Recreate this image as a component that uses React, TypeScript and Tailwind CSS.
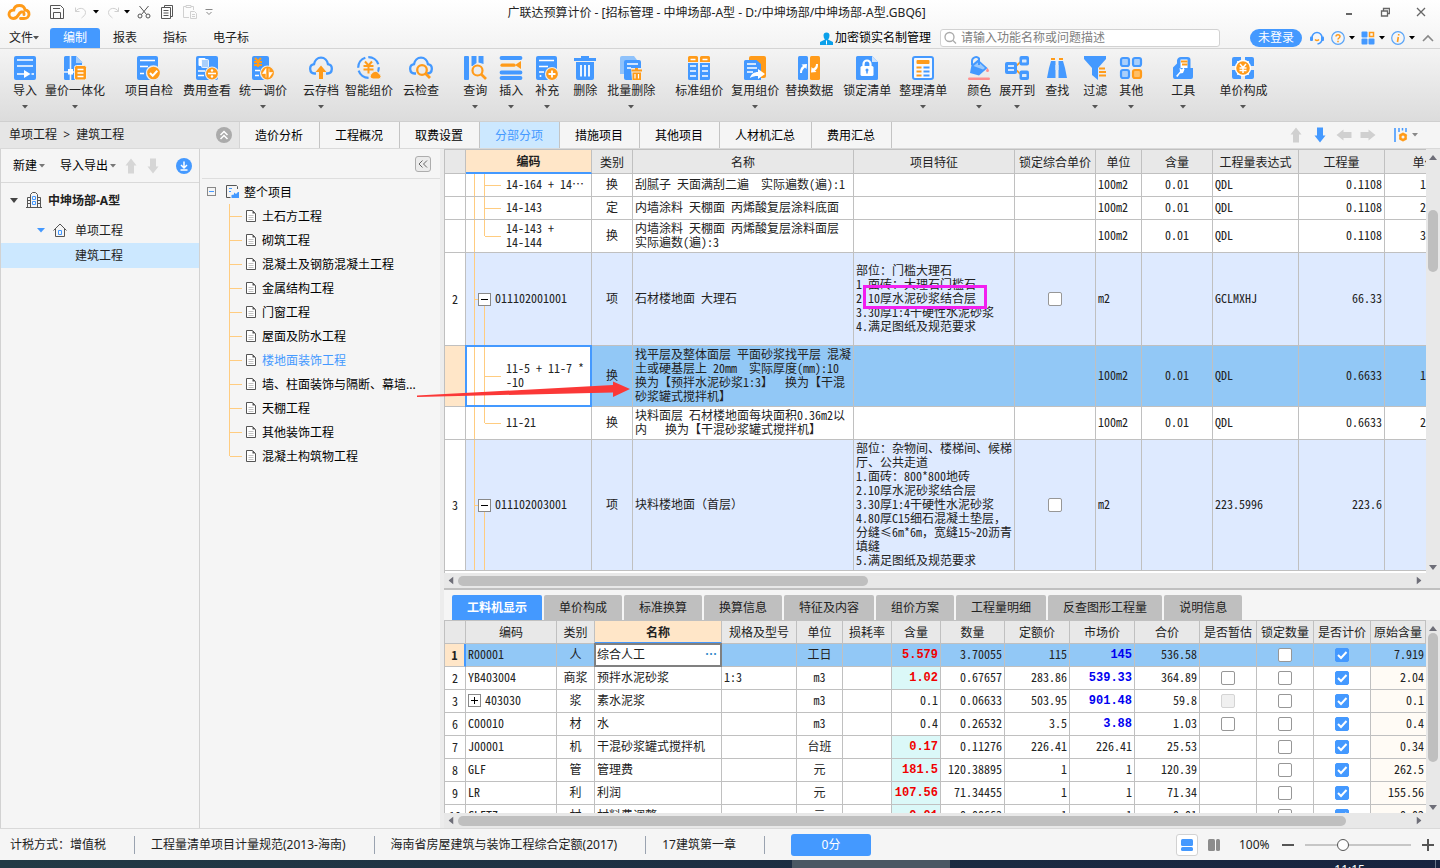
import React, { type ReactNode } from "react";

const B = "#4499ff";
const O = "#ff9b1a";
const L = "#a9cffb";

function Icon({ children, className = "size-6" }: { children: ReactNode; className?: string }) {
  return (
    <svg viewBox="0 0 24 24" className={className} fill="none" aria-hidden="true">
      {children}
    </svg>
  );
}

function Caret({ className = "text-[#555]" }: { className?: string }) {
  return (
    <svg viewBox="0 0 6 4" className={`h-1 w-1.5 shrink-0 ${className}`} aria-hidden="true">
      <path d="M0 0h6L3 3.5z" fill="currentColor" />
    </svg>
  );
}

const cloud = "M7 17.5H5.5A4.7 4.7 0 0 1 5 8.2C5.6 4.4 8.5 1.6 12 1.6s6.4 2.8 7 6.6a4.7 4.7 0 0 1-.5 9.3H17";

const icons: Record<string, ReactNode> = {
  import: (
    <Icon>
      <rect x="1" width="22" height="24" rx="2" fill={B} />
      <path d="M4 4h16M4 10h16M4 18h9M18.500 18H21" stroke="#fff" strokeWidth="1.6" />
      <path d="M11 14l6.500 4-6.500 4z" fill="#fff" />
    </Icon>
  ),
  combine: (
    <Icon>
      <path d="M1 1.500A1.500 1.500 0 0 1 2.500 0H13l6 6v18H2.500A1.500 1.500 0 0 1 1 22.500z" fill={B} />
      <path d="M13 0l7 7h-7z" fill={L} />
      <path d="M7.500 0v24M1 16h12" stroke="#eef4fb" strokeWidth="1.600" />
      <rect x="5" y="13" width="5" height="5.500" fill="#fff" />
      <rect x="11.500" y="9.500" width="12" height="14.500" rx="2" fill={O} stroke="#f0f0f0" />
      <path d="M14.500 13.500h6M14.500 17h6M14.500 20.500h6" stroke="#fff" strokeWidth="1.400" />
    </Icon>
  ),
  check: (
    <Icon>
      <rect x="0" width="21" height="24" rx="2" fill={B} />
      <path d="M3 4.500h15M3 10.500h8M3 17.500h4" stroke="#fff" strokeWidth="1.700" />
      <circle cx="16.500" cy="17" r="7" fill={O} stroke="#ececec" strokeWidth="1.300" />
      <path d="M13 17l2.700 2.800 4.600-5" stroke="#fff" strokeWidth="2" />
    </Icon>
  ),
  fee: (
    <Icon>
      <rect x="1" width="22" height="24" rx="2" fill={B} />
      <rect x="3.500" y="2" width="7" height="8" rx="1" fill="#fff" />
      <rect x="6.500" y="3.500" width="7" height="8" rx="1" fill={L} stroke="#fff" strokeWidth=".8" />
      <path d="M3 15h7M3 19.500h6" stroke="#fff" strokeWidth="1.600" />
      <circle cx="17" cy="17.500" r="6.500" fill={O} stroke="#ececec" strokeWidth="1.200" />
      <path d="M13 17.500h8" stroke="#fff" strokeWidth="1.600" />
      <circle cx="17" cy="14.500" r="1.200" fill="#fff" />
      <circle cx="17" cy="20.500" r="1.200" fill="#fff" />
    </Icon>
  ),
  adjust: (
    <Icon>
      <rect x="1" width="17" height="24" rx="2" fill={B} />
      <path d="M4 2l3 3.500L10 2M3 6h8M3 9h8M7 5.500V11" stroke={O} strokeWidth="2" />
      <path d="M4 14.500h5M4 19.500h4" stroke="#fff" strokeWidth="1.600" />
      <circle cx="16.500" cy="17" r="7" fill={O} stroke="#ececec" strokeWidth="1.200" />
      <path d="M15 21.500v-9l-3.500 5H15M18 12.500v9l3.500-5H18" fill="#fff" stroke="#fff" strokeWidth=".6" />
    </Icon>
  ),
  cloudSave: (
    <Icon>
      <path d={cloud} stroke={B} strokeWidth="2.300" />
      <path d="M12 9.500l5.500 6.500H14v7h-4v-7H6.500z" fill={O} />
    </Icon>
  ),
  smart: (
    <Icon>
      <circle cx="11.500" cy="11.500" r="10.300" stroke={B} strokeWidth="2.200" strokeDasharray="13 3" />
      <path d="M8 5.500l3.500 4L15 5.500M6.500 10h10M6.500 13.500h10M11.500 9.500v8" stroke={O} strokeWidth="2" />
      <path d="M16 23h6a2.600 2.600 0 0 0 .3-5 4 4 0 0 0-7.300-.6A2.900 2.900 0 0 0 16 23z" fill={O} stroke="#ececec" />
    </Icon>
  ),
  cloudCheck: (
    <Icon>
      <path d={cloud} stroke={B} strokeWidth="2.300" />
      <circle cx="13" cy="14" r="4.800" stroke={O} strokeWidth="2.300" fill="#ececec" />
      <path d="M16.500 17.500l4.500 4.500" stroke={O} strokeWidth="2.800" />
    </Icon>
  ),
  query: (
    <Icon>
      <rect x="1" width="5" height="24" rx="1" fill={B} />
      <path d="M8.500 0h5v7l-4 3h-1zM15.500 0h5v8l-5-1.500z" fill={B} />
      <circle cx="14.500" cy="14.500" r="5" stroke={O} strokeWidth="2.200" />
      <path d="M18 18l5 5" stroke={O} strokeWidth="2.600" />
    </Icon>
  ),
  insert: (
    <Icon>
      <path d="M2.500 2h19M2.500 16.500h19M2.500 22h19" stroke={B} strokeWidth="3.800" strokeLinecap="round" />
      <path d="M3 9.200h12" stroke={O} strokeWidth="3.200" strokeLinecap="round" />
      <path d="M22 5v8l-6-4z" fill={O} />
    </Icon>
  ),
  supplement: (
    <Icon>
      <rect x="1" width="21" height="24" rx="2" fill={B} />
      <path d="M4 4.500h15M4 10.500h9M4 16h5" stroke="#fff" strokeWidth="1.600" />
      <circle cx="5.500" cy="20" r="1" fill="#fff" />
      <circle cx="17" cy="18" r="6.500" fill={O} stroke="#ececec" strokeWidth="1.200" />
      <path d="M13.500 18h7M17 14.500v7" stroke="#fff" strokeWidth="1.800" />
    </Icon>
  ),
  remove: (
    <Icon>
      <path d="M8 0h8v2h7v3H1V2h7zM3 6h18v16a2 2 0 0 1-2 2H5a2 2 0 0 1-2-2z" fill={B} />
      <path d="M8 9v11.500M12 9v11.500M16 9v11.500" stroke="#fff" strokeWidth="1.800" />
    </Icon>
  ),
  batchRemove: (
    <Icon>
      <path d="M1 2a2 2 0 0 1 2-2h12l3 4H7v14H1z" fill="#8fc2fb" />
      <rect x="5" y="4" width="17" height="20" rx="2" fill={B} />
      <path d="M8 8h11M8 12h4" stroke="#fff" strokeWidth="1.300" />
      <path d="M12 12h11v12H13z" fill="#ececec" />
      <path d="M16 12h3v1.500h4v2H12.500v-2H16zM13.500 16.500h8.500V24h-8.500z" fill={O} />
      <path d="M16 18v4.500M19.500 18v4.500" stroke="#fff" strokeWidth="1.200" />
    </Icon>
  ),
  standard: (
    <Icon>
      <path d="M1 6V1.500Q1 0 2.500 0h7Q11 0 11 1.500V6zM13 6V1.500Q13 0 14.500 0h7Q23 0 23 1.500V6z" fill={O} />
      <path d="M1 7h10v17H2.500Q1 24 1 22.500zM13 7h10v15.500q0 1.500-1.500 1.500H13z" fill={B} />
      <path d="M3.500 3.500h5M15.500 3.500h5M3 10h6M15 10h6M3 15h6M15 15h6M3 20h6M15 20h6" stroke="#fff" strokeWidth="1.600" />
    </Icon>
  ),
  reuse: (
    <Icon>
      <rect x="6" width="17" height="22" rx="2" fill={O} />
      <path d="M1 5.500A1.500 1.500 0 0 1 2.500 4h11l4.500 4v16H2.500A1.500 1.500 0 0 1 1 22.500z" fill={B} />
      <path d="M4 8h9M4 12h10M4 16h6" stroke="#fff" strokeWidth="1.500" />
      <path d="M7 22c1-4 4-6 8-6v-3l7 5-7 5v-3c-3 0-5.500.500-8 2z" fill="#fff" />
    </Icon>
  ),
  replace: (
    <Icon>
      <rect x="1" width="10" height="24" rx="1.500" fill={B} />
      <rect x="13" width="10" height="24" rx="1.500" fill={O} />
      <path d="M3 17c0-4 1-6 3-7L4.500 8.500 10 8l-.5 5L8 11.500c-2 1.500-3 3-3 5.500zM21 8c0 4-1 5-3 6.500l1.500 1.500-5.500.5.500-5.500 1.500 1.500c2-1 3-2.500 3-4.500z" fill="#fff" />
    </Icon>
  ),
  lock: (
    <Icon>
      <path d="M1 1.500A1.500 1.500 0 0 1 2.500 0H17l6 6v16.500a1.500 1.500 0 0 1-1.500 1.500h-19A1.500 1.500 0 0 1 1 22.500z" fill={B} />
      <path d="M17 0l6 6h-6z" fill="#cfe3fb" />
      <rect x="5.500" y="10" width="13" height="10" rx="1.500" fill="#fff" />
      <path d="M8.500 11V8a3.500 3.500 0 0 1 7 0v3" stroke="#fff" strokeWidth="2.200" />
      <circle cx="12" cy="14" r="1.500" fill={B} />
      <path d="M12 14v3.500" stroke={B} strokeWidth="1.500" />
    </Icon>
  ),
  arrange: (
    <Icon>
      <rect x="2" y="1" width="20" height="22" rx="2" fill="#f6f9fd" stroke={B} strokeWidth="2" />
      <rect x="5.500" y="4" width="13" height="4" rx="1" fill={O} />
      <path d="M5.500 11.500h5M5.500 15.500h5M5.500 19.500h5" stroke={O} strokeWidth="1.800" />
      <path d="M12.500 11.500h6M12.500 15.500h6M12.500 19.500h6" stroke={B} strokeWidth="1.800" />
    </Icon>
  ),
  color: (
    <Icon>
      <path d="M11 3.500L20.500 12 12 19.500 3 17l1.500-8z" fill={B} />
      <path d="M6.500 10l5-4 6.500 6-2 1.500z" fill="#9cc9fb" />
      <path d="M5 9V5a4 4 0 0 1 7-2.500V9" stroke={B} strokeWidth="2" />
      <path d="M20.500 12.500q2 3 0 3.500-2-.5 0-3.500z" fill="#ff8f8f" stroke="#ff8f8f" />
      <rect x="1" y="21.500" width="22" height="2.500" rx="1.200" fill="#ff8f8f" />
    </Icon>
  ),
  expand: (
    <Icon>
      <path d="M17 4.500L9 12l8 7.500" stroke={O} strokeWidth="1.800" />
      <rect x="0" y="6" width="12" height="12" rx="2" fill={B} />
      <path d="M3 10h6M3 14h6" stroke="#fff" strokeWidth="1.500" />
      <rect x="14.500" y="0" width="9.500" height="9.500" rx="2" fill={B} />
      <rect x="14.500" y="14.500" width="9.500" height="9.500" rx="2" fill={B} />
      <rect x="17" y="3.500" width="4.500" height="3" rx=".5" fill="#d9e9fb" />
      <rect x="17" y="18" width="4.500" height="3" rx=".5" fill="#d9e9fb" />
    </Icon>
  ),
  find: (
    <Icon>
      <path d="M6 3h4M14 3h4" stroke={O} strokeWidth="2.200" />
      <path d="M6 5h4.500v17H2L4 12zM18 5h-4.500v17H22l-2-10z" fill={B} />
      <path d="M10.500 9h3v5h-3z" fill="#d9e9fb" />
    </Icon>
  ),
  filter: (
    <Icon>
      <path d="M1 0h22v3l-8 9v12l-6-5v-7L1 3z" fill={B} />
      <path d="M16 12.500h6M16 16h7M16 19.500h7" stroke={O} strokeWidth="2" />
    </Icon>
  ),
  other: (
    <Icon>
      <rect x="2" y="2" width="8" height="8" rx="2" fill={L} stroke={B} strokeWidth="2.200" />
      <rect x="14" y="2" width="8" height="8" rx="2" fill={L} stroke={B} strokeWidth="2.200" />
      <rect x="2" y="14" width="8" height="8" rx="2" fill={L} stroke={B} strokeWidth="2.200" />
      <rect x="14" y="14" width="8" height="8" rx="2" fill="#ffbf66" stroke={O} strokeWidth="2.200" />
    </Icon>
  ),
  tools: (
    <Icon>
      <path d="M2 11.500l4-4V4.500Q6.500 1 10 1h6.500Q19.500 1 19.500 4v8H22v9q0 2-2 2H4q-2 0-2-2z" fill={B} />
      <path d="M9.500 12V3.500h7V12z" fill="#fff" />
      <path d="M10 5.500h6.500M11 8.500h5.500" stroke={O} strokeWidth="1.800" />
      <path d="M5 20l4-4.500-.5-3.500 2.500 1.500 1.500-2 1 2-1.500 3.500-3 .5-2.500 3.500z" fill="#fff" />
    </Icon>
  ),
  price: (
    <Icon>
      <path d="M3 1h7v4H6v5H1V3q0-2 2-2zM21 1h-7v4h4v5h5V3q0-2-2-2zM3 23h7v-4H6v-5H1v7q0 2 2 2zM21 23h-7v-4h4v-5h5v7q0 2-2 2z" fill={B} />
      <circle cx="12" cy="12" r="7.500" fill={O} stroke="#fff" strokeWidth="1.400" />
      <path d="M9 8l3 3.500L15 8M8.500 12h7M8.500 14.500h7M12 11.500V17" stroke="#fff" strokeWidth="1.500" />
    </Icon>
  ),
};

const ribbon: { label: string; icon: string; gap: string; menu?: boolean }[] = [
  { label: "导入", icon: "import", gap: "ml-0", menu: true },
  { label: "量价一体化", icon: "combine", gap: "ml-2", menu: true },
  { label: "项目自检", icon: "check", gap: "ml-5" },
  { label: "费用查看", icon: "fee", gap: "ml-2.5" },
  { label: "统一调价", icon: "adjust", gap: "ml-2", menu: true },
  { label: "云存档", icon: "cloudSave", gap: "ml-4", menu: true },
  { label: "智能组价", icon: "smart", gap: "ml-1.5" },
  { label: "云检查", icon: "cloudCheck", gap: "ml-2.5" },
  { label: "查询", icon: "query", gap: "ml-6", menu: true },
  { label: "插入", icon: "insert", gap: "ml-3", menu: true },
  { label: "补充", icon: "supplement", gap: "ml-3", menu: true },
  { label: "删除", icon: "remove", gap: "ml-3.5" },
  { label: "批量删除", icon: "batchRemove", gap: "ml-2.5", menu: true },
  { label: "标准组价", icon: "standard", gap: "ml-5" },
  { label: "复用组价", icon: "reuse", gap: "ml-2", menu: true },
  { label: "替换数据", icon: "replace", gap: "ml-1.5" },
  { label: "锁定清单", icon: "lock", gap: "ml-2.5" },
  { label: "整理清单", icon: "arrange", gap: "ml-2", menu: true },
  { label: "颜色", icon: "color", gap: "ml-5", menu: true },
  { label: "展开到", icon: "expand", gap: "ml-2", menu: true },
  { label: "查找", icon: "find", gap: "ml-2.5" },
  { label: "过滤", icon: "filter", gap: "ml-3.5", menu: true },
  { label: "其他", icon: "other", gap: "ml-3", menu: true },
  { label: "工具", icon: "tools", gap: "ml-7", menu: true },
  { label: "单价构成", icon: "price", gap: "ml-6", menu: true },
];

function Checkbox({ checked, disabled, label }: { checked?: boolean; disabled?: boolean; label: string }) {
  return (
    <span className="inline-grid size-3.5 align-middle">
      <input
        type="checkbox"
        aria-label={label}
        defaultChecked={checked}
        disabled={disabled}
        className="peer col-start-1 row-start-1 size-3.5 appearance-none rounded-[2px] border border-[#979797] bg-white checked:border-[#4499ff] checked:bg-[#4499ff] disabled:border-[#d4d4d4] disabled:bg-[#f0f0f0]"
      />
      <svg viewBox="0 0 14 14" className="pointer-events-none col-start-1 row-start-1 size-3.5 opacity-0 peer-checked:opacity-100" fill="none" aria-hidden="true">
        <path d="M3 7l3 3 5.500-6" stroke="#fff" strokeWidth="2" />
      </svg>
    </span>
  );
}

function TitleBar() {
  return (
    <div className="flex h-7 items-center pb-1">
      <div className="flex flex-1 items-center pl-[7px] text-[#555]">
        <svg viewBox="0 0 24 18" className="h-[18px] w-6" fill="none" aria-hidden="true">
          <path
            d="M13.500 15.500H17c3 0 5-2 5-4.300 0-2.400-1.700-4-4-4.200C17.500 4 15.300 2.500 12.500 2.500c-3 0-5.300 1.800-5.700 4.500-2.600 0-4.800 1.700-4.800 4.300 0 2.400 1.800 4.200 4.300 4.200 5.700 0 4.200-5.500 8-6.500 2-.4 3 .8 2.700 2.500"
            stroke={O}
            strokeWidth="2.900"
            strokeLinecap="round"
          />
        </svg>
        <button aria-label="保存" className="ml-[19px]">
          <svg viewBox="0 0 14 14" className="size-3.5" fill="none" stroke="currentColor" aria-hidden="true">
            <path d="M.500.500h10l3 3v10H.500zM3.500 13.500v-6h7v6M3 3.500h7" />
          </svg>
        </button>
        <button aria-label="撤销" className="ml-2.5 text-[#d0d0d0]">
          <svg viewBox="0 0 13 13" className="size-[13px]" fill="none" stroke="currentColor" aria-hidden="true">
            <path d="M1.500 1.500v4h4M1.500 5.500c3-5 10-3.500 10 1 0 3-2.500 4-4 5.500" />
          </svg>
        </button>
        <Caret className="ml-1.5 text-black" />
        <button aria-label="恢复" className="ml-2 text-[#d0d0d0]">
          <svg viewBox="0 0 13 13" className="size-[13px]" fill="none" stroke="currentColor" aria-hidden="true">
            <path d="M11.500 1.500v4h-4M11.500 5.500c-3-5-10-3.500-10 1 0 3 2.500 4 4 5.500" />
          </svg>
        </button>
        <Caret className="ml-1 text-black" />
        <button aria-label="剪切" className="ml-[7px]">
          <svg viewBox="0 0 14 14" className="size-3.5" fill="none" stroke="currentColor" aria-hidden="true">
            <path d="M2.500 1l7 8.500M11.500 1l-7 8.500" />
            <circle cx="3" cy="11" r="2" />
            <circle cx="11" cy="11" r="2" />
          </svg>
        </button>
        <button aria-label="复制" className="ml-2.5">
          <svg viewBox="0 0 12 14" className="h-3.5 w-3" fill="none" stroke="currentColor" aria-hidden="true">
            <path d="M3.500 2V.500h8v11H10M.500 2.500h9v11h-9zM2.500 5.500h5M2.500 8h5M2.500 10.500h5" />
          </svg>
        </button>
        <button aria-label="粘贴" className="ml-2.5 text-[#d0d0d0]">
          <svg viewBox="0 0 14 14" className="size-3.5" fill="none" stroke="currentColor" aria-hidden="true">
            <path d="M6 12.500H.500v-11H3m5 0h2.500V5M3 .500h5v2H3zM7.500 6.500h4l2 2v5h-6zM9 9.500h3M9 11.500h3" />
          </svg>
        </button>
        <svg viewBox="0 0 8 7" className="ml-2 h-[7px] w-2" fill="none" stroke="#888" aria-hidden="true">
          <path d="M.500.500h7M1.500 3L4 5.500 6.500 3" />
        </svg>
      </div>
      <h1 className="pt-0.5 whitespace-nowrap text-[#222]">广联达预算计价 - [招标管理 - 中坤场部-A型 - D:/中坤场部/中坤场部-A型.GBQ6]</h1>
      <div className="flex flex-1 items-center justify-end gap-[26px] pr-3.5 text-[#666]">
        <button aria-label="最小化">
          <svg viewBox="0 0 10 10" className="size-2.5" stroke="currentColor" strokeWidth="2" aria-hidden="true"><path d="M2 7h6" /></svg>
        </button>
        <button aria-label="还原">
          <svg viewBox="0 0 10 10" className="size-2.5" fill="none" stroke="currentColor" aria-hidden="true"><path d="M3.500 3.500v-2h6v5h-2M1.500 4h6v5h-6z" strokeWidth="1.300" /></svg>
        </button>
        <button aria-label="关闭">
          <svg viewBox="0 0 10 10" className="size-2.5" stroke="currentColor" strokeWidth="1.300" aria-hidden="true"><path d="M1 1l8 8M9 1L1 9" /></svg>
        </button>
      </div>
    </div>
  );
}

function MenuBar() {
  return (
    <div className="flex h-5 items-center">
      <nav className="flex h-full items-center">
        <button className="flex items-center pl-[9px]">文件<Caret className="text-[#555]" /></button>
        <button className="ml-[11px] h-full w-[50px] rounded-t-[3px] bg-[#4499ff] text-white">编制</button>
        <button className="w-[50px]">报表</button>
        <button className="w-[50px]">指标</button>
        <button className="w-[62px]">电子标</button>
      </nav>
      <div className="ml-auto flex items-center">
        <button className="flex items-center gap-0.5 text-black">
          <svg viewBox="0 0 13 13" className="size-[13px]" fill="#0ba0ea" aria-hidden="true">
            <path d="M3.500 3.500a3 3 0 0 1 6 0q0 2.500-1.500 4l5 2.500v3H0v-3l5-2.500q-1.500-1.500-1.500-4z" />
            <path d="M6.500 8.500v4" stroke="#fff" />
          </svg>
          加密锁实名制管理
        </button>
        <label className="ml-[9px] flex h-[18px] w-[280px] items-center rounded-[3px] border border-[#d2d2d2] bg-white pl-0.5">
          <svg viewBox="0 0 14 14" className="size-3.5" fill="none" stroke="#aaa" strokeWidth="1.300" aria-hidden="true">
            <circle cx="6.500" cy="6" r="4.500" /><path d="M10 9.500l3 3" />
          </svg>
          <input aria-label="搜索" placeholder="请输入功能名称或问题描述" className="ml-1 min-w-0 flex-1 bg-transparent outline-none placeholder:text-[#808080]" />
        </label>
        <button className="ml-[30px] h-[18px] w-[52px] rounded-full bg-[#4499ff] text-white">未登录</button>
        <button aria-label="客服" className="ml-2">
          <svg viewBox="0 0 14 14" className="size-3.5" fill="none" aria-hidden="true">
            <path d="M2 8V6.500a5 5 0 0 1 10 0V8q0 4-4.500 5" stroke={B} strokeWidth="1.500" />
            <rect y="5.500" width="3" height="4.500" rx="1" fill={B} /><rect x="11" y="5.500" width="3" height="4.500" rx="1" fill={B} />
            <path d="M5 8.500q2 2 4 0" stroke={O} strokeWidth="1.500" />
          </svg>
        </button>
        <button aria-label="帮助" className="ml-[7px] flex items-center gap-1">
          <svg viewBox="0 0 14 14" className="size-3.5" fill="none" aria-hidden="true">
            <circle cx="7" cy="7" r="6.300" stroke="#5aa5f8" strokeWidth="1.200" />
            <path d="M5 5.500c0-2.500 4-2.500 4 0C9 7 7 7 7 8.500M7 9.800v1.400" stroke={O} strokeWidth="1.500" />
          </svg>
          <Caret className="text-black" />
        </button>
        <button aria-label="应用" className="ml-1.5 flex items-center gap-1">
          <svg viewBox="0 0 14 14" className="size-3.5" aria-hidden="true">
            <rect x=".5" y=".5" width="6" height="6" rx="1" fill={B} /><rect x=".5" y="7.500" width="6" height="6" rx="1" fill={B} />
            <rect x="7.500" y="7.500" width="6" height="6" rx="1" fill={B} /><rect x="8.500" y="1.500" width="4" height="4" fill="none" stroke={O} strokeWidth="1.500" />
          </svg>
          <Caret className="text-black" />
        </button>
        <button aria-label="信息" className="ml-1.5 flex items-center gap-1">
          <svg viewBox="0 0 14 14" className="size-3.5" fill="none" aria-hidden="true">
            <circle cx="7" cy="7" r="6.300" stroke="#5aa5f8" strokeWidth="1.200" />
            <path d="M7.700 3v1.500M7.300 6l-.8 5" stroke={O} strokeWidth="1.600" />
          </svg>
          <Caret className="text-black" />
        </button>
        <button aria-label="收起" className="mr-1.5 ml-[7px]">
          <svg viewBox="0 0 12 8" className="h-2 w-3" fill="none" stroke="#888" strokeWidth="1.600" aria-hidden="true"><path d="M1 7l5-5 5 5" /></svg>
        </button>
      </div>
    </div>
  );
}

function Ribbon() {
  return (
    <div className="flex h-[72px] shrink-0 items-start overflow-hidden bg-linear-to-b from-[#f4f4f4] to-[#dcdcdc] pt-[7px] pl-[13px]">
      {ribbon.map((r) => (
        <button key={r.label} className={`flex shrink-0 flex-col items-center ${r.gap}`}>
          {icons[r.icon]}
          <span className="mt-[3px] h-4 leading-4">{r.label}</span>
          {r.menu && <Caret className="mt-1.5 text-[#555]" />}
        </button>
      ))}
    </div>
  );
}

const pageTabs = ["造价分析", "工程概况", "取费设置", "分部分项", "措施项目", "其他项目", "人材机汇总", "费用汇总"];

function Arrow({ turn = "", className = "text-[#d0d0d0]" }: { turn?: string; className?: string }) {
  return (
    <svg viewBox="0 0 16 16" className={`size-4 ${turn} ${className}`} aria-hidden="true">
      <path d="M8 .5l5.500 7H11v8H5v-8H2.500z" fill="currentColor" />
    </svg>
  );
}

function PageTabs() {
  return (
    <div className="flex h-7 shrink-0 border-y border-t-[#cfcfcf] border-b-[#d9d9d9] bg-[#f5f5f5]">
      <div className="flex w-60 items-center justify-between border-r border-[#d5d5d5] bg-[#e6e6e6] pr-[7px] pl-[9px] text-[#222]">
        <span>单项工程 &nbsp;&gt; &nbsp;建筑工程</span>
        <button aria-label="收起导航">
          <svg viewBox="0 0 16 16" className="size-4" fill="none" aria-hidden="true">
            <circle cx="8" cy="8" r="8" fill="#ababab" />
            <path d="M4.500 8L8 4.500 11.500 8M4.500 12L8 8.500l3.500 3.500" stroke="#fff" strokeWidth="1.500" />
          </svg>
        </button>
      </div>
      {pageTabs.map((t) => (
        <button key={t} className={`border-r border-[#c4c4c4] pt-0.5 pr-4 pl-[15px] ${t === "分部分项" ? "bg-[#cce8ff] text-[#4499ff]" : "text-black"}`}>
          {t}
        </button>
      ))}
      <div className="ml-auto flex items-center gap-2 pr-[22px]">
        <Arrow />
        <Arrow turn="rotate-180" className="text-[#4499ff]" />
        <Arrow turn="-rotate-90" />
        <Arrow turn="rotate-90" />
        <button aria-label="列设置" className="ml-2.5 flex items-center gap-1">
          <svg viewBox="0 0 14 14" className="size-3.5" fill="none" aria-hidden="true">
            <path d="M1 0v14" stroke={B} strokeWidth="1.600" />
            <path d="M5 0v4M8.500 0v2.500M12 0v4" stroke={B} strokeWidth="1.500" />
            <circle cx="9" cy="9" r="2.700" stroke={O} strokeWidth="2.400" />
            <path d="M9 4.500v9M5 6.800l8 4.500M13 6.800l-8 4.500" stroke={O} strokeWidth="1.200" strokeDasharray="2 5" />
          </svg>
          <Caret className="text-[#888]" />
        </button>
      </div>
    </div>
  );
}

function ProjectPanel() {
  return (
    <aside className="flex w-[200px] shrink-0 flex-col border-x border-[#d2d2d2] bg-[#f5f5f5]">
      <div className="flex h-[34px] items-center border-b border-[#d9d9d9] pl-3 text-black">
        <button className="flex items-center">新建<Caret className="ml-0.5 text-[#777]" /></button>
        <button className="ml-[15px] flex items-center">导入导出<Caret className="ml-0.5 text-[#777]" /></button>
        <Arrow className="ml-[7px] text-[#d6d6d6]" />
        <Arrow turn="rotate-180" className="ml-1.5 text-[#d6d6d6]" />
        <button aria-label="下载" className="mr-[7px] ml-auto">
          <svg viewBox="0 0 16 16" className="size-4" fill="none" aria-hidden="true">
            <circle cx="8" cy="8" r="8" fill={B} />
            <path d="M8 3.500v6M5 7l3 3 3-3M4.500 12h7" stroke="#fff" strokeWidth="1.500" />
          </svg>
        </button>
      </div>
      <ul>
        <li className="flex h-[34px] items-center pl-[9px] font-bold text-[#222]">
          <svg viewBox="0 0 8 5" className="h-[5px] w-2" aria-hidden="true"><path d="M0 0h8L4 5z" fill="#444" /></svg>
          <svg viewBox="0 0 16 16" className="ml-2 size-4" fill="none" aria-hidden="true">
            <path d="M0 15.500h16M4.500 15V2.500l2-2h3l2 2V15M4.500 5.500h-3V15M11.500 5.500h3V15M1.500 8.500h3M1.500 11.500h3M11.500 8.500h3M11.500 11.500h3" stroke="#555" />
            <path d="M6.500 4.500h3v3h-3zM6.500 9.500h3v3h-3z" stroke={B} />
          </svg>
          <span className="ml-1.5 pt-0.5">中坤场部-A型</span>
        </li>
        <li className="flex h-[26px] items-center pl-9 text-[#222]">
          <svg viewBox="0 0 8 5" className="h-[5px] w-2" aria-hidden="true"><path d="M0 0h8L4 4.500z" fill={B} /></svg>
          <svg viewBox="0 0 14 14" className="ml-2 size-3.5" fill="none" aria-hidden="true">
            <path d="M.5 7.500L7 1l6.500 6.500M2.500 6v7.500h9V6" stroke="#555" />
            <path d="M5.500 7.500h3v4h-3z" stroke={B} />
          </svg>
          <span className="ml-2 pt-0.5">单项工程</span>
        </li>
        <li className="flex h-[25px] items-center bg-[#cce8ff] pl-[74px] text-[#222]">建筑工程</li>
      </ul>
    </aside>
  );
}

const sections = ["土石方工程", "砌筑工程", "混凝土及钢筋混凝土工程", "金属结构工程", "门窗工程", "屋面及防水工程", "楼地面装饰工程", "墙、柱面装饰与隔断、幕墙...", "天棚工程", "其他装饰工程", "混凝土构筑物工程"];

function SectionPanel() {
  return (
    <aside className="flex w-60 shrink-0 flex-col bg-[#f5f5f5]">
      <div className="ml-0.5 flex h-[30px] items-center justify-end border-b border-[#dedede] pr-[9px]">
        <button aria-label="折叠" className="grid size-4 place-items-center rounded-[3px] border border-[#adadad] bg-[#ebebeb]">
          <svg viewBox="0 0 10 8" className="h-2 w-2.5" fill="none" stroke="#666" aria-hidden="true"><path d="M4.500.5L1 4l3.500 3.500M9 .5L5.500 4 9 7.500" /></svg>
        </button>
      </div>
      <div className="flex h-[25px] items-center pl-[7px] text-black">
        <span className="grid size-[9px] place-items-center border border-[#888]"><span className="h-px w-[5px] bg-[#4499ff]" /></span>
        <svg viewBox="0 0 13 13" className="ml-2.5 size-[13px]" fill="none" aria-hidden="true">
          <path d="M11.500 4V1.500L10.500.5h-10v12h4" stroke="#555" />
          <path d="M3 3.500h3M3 6.500h2" stroke={B} />
          <path d="M5.500 13v-3l2.500-.5V7.500l2 1.500 2-2h1v6z" fill={B} />
        </svg>
        <span className="ml-[5px] pt-0.5">整个项目</span>
      </div>
      <ul className="text-black">
        {sections.map((s, i) => (
          <li key={s} className="flex h-6 items-center pl-[29px]">
            <span className={`w-px self-start bg-[#ffcc80] ${i === sections.length - 1 ? "h-3" : "h-6"}`} />
            <span className="h-px w-3 bg-[#ffcc80]" />
            <svg viewBox="0 0 10 12" className="ml-1 h-3 w-2.5" fill="none" aria-hidden="true">
              <path d="M.5.5h6l3 3v8h-9z" fill="#fff" stroke="#555" />
              <path d="M6.500.5v3h3z" fill="#555" />
              <path d="M2.500 5.500h5M2.500 7.500h5M2.500 9.500h5" stroke="#aaa" strokeWidth=".7" />
            </svg>
            <span className={`ml-1.5 pt-0.5 ${s === "楼地面装饰工程" ? "text-[#4499ff]" : ""}`}>{s}</span>
          </li>
        ))}
      </ul>
    </aside>
  );
}

function Triangle({ turn = "" }: { turn?: string }) {
  return (
    <svg viewBox="0 0 8 5" className={`h-[5px] w-2 shrink-0 ${turn}`} aria-hidden="true">
      <path d="M0 5h8L4 0z" fill="#6e6e78" />
    </svg>
  );
}

function VScroll({ lead, thumb }: { lead: string; thumb: string }) {
  return (
    <div className="flex w-3.5 shrink-0 flex-col items-center bg-[#e8e8e8] pt-1.5 pb-[18px]">
      <Triangle />
      <span className={`w-2.5 rounded-full bg-[#bfbfbf] ${lead} ${thumb}`} />
      <span className="mt-auto"><Triangle turn="rotate-180" /></span>
    </div>
  );
}

function HScroll({ thumb }: { thumb: string }) {
  return (
    <div className="flex h-[15px] shrink-0 items-center bg-[#e8e8e8] px-[3px]">
      <Triangle turn="-rotate-90" />
      <span className={`ml-[3px] h-2.5 rounded-full bg-[#bfbfbf] ${thumb}`} />
      <span className="ml-auto flex"><Triangle turn="rotate-90" /></span>
    </div>
  );
}

const frame = "border-r border-b border-[#c0c0c0] p-0";
const cell = `${frame} pb-0.5`;
const head = `${frame} bg-[#e8e8e8] font-normal`;
const activeHead = "border-r border-b-2 border-r-[#c0c0c0] border-b-[#4499ff] bg-[#ffe6c8] p-0 font-bold";

type Bill = {
  no?: string;
  code: string;
  kind: string;
  name: string;
  feature?: string;
  unit: string;
  qty?: string;
  expr: string;
  amount: string;
  price?: string;
  height: string;
  tree: "item" | "child" | "last";
  selected?: boolean;
  marked?: boolean;
};

const bills: Bill[] = [
  { code: "14-164 + 14…", kind: "换", name: "刮腻子 天面满刮二遍  实际遍数(遍):1", unit: "100m2", qty: "0.01", expr: "QDL", amount: "0.1108", price: "1", height: "h-[22px]", tree: "child" },
  { code: "14-143", kind: "定", name: "内墙涂料 天棚面 丙烯酸复层涂料底面", unit: "100m2", qty: "0.01", expr: "QDL", amount: "0.1108", price: "2", height: "h-[22px]", tree: "child" },
  { code: "14-143 +\n14-144", kind: "换", name: "内墙涂料 天棚面 丙烯酸复层涂料面层\n实际遍数(遍):3", unit: "100m2", qty: "0.01", expr: "QDL", amount: "0.1108", price: "3", height: "h-8", tree: "last" },
  { no: "2", code: "011102001001", kind: "项", name: "石材楼地面 大理石", feature: "部位：门槛大理石\n1.面砖：大理石门槛石\n2.10厚水泥砂浆结合层\n3.30厚1:4干硬性水泥砂浆\n4.满足图纸及规范要求", unit: "m2", expr: "GCLMXHJ", amount: "66.33", height: "h-[92px]", tree: "item", marked: true },
  { code: "11-5 + 11-7 *\n-10", kind: "换", name: "找平层及整体面层 平面砂浆找平层 混凝\n土或硬基层上 20mm  实际厚度(mm):10\n换为【预拌水泥砂浆1:3】  换为【干混\n砂浆罐式搅拌机】", unit: "100m2", qty: "0.01", expr: "QDL", amount: "0.6633", price: "1", height: "h-[60px]", tree: "child", selected: true },
  { code: "11-21", kind: "换", name: "块料面层 石材楼地面每块面积0.36m2以\n内   换为【干混砂浆罐式搅拌机】", unit: "100m2", qty: "0.01", expr: "QDL", amount: "0.6633", price: "2", height: "h-8", tree: "last" },
  { no: "3", code: "011102003001", kind: "项", name: "块料楼地面（首层）", feature: "部位：杂物间、楼梯间、候梯\n厅、公共走道\n1.面砖：800*800地砖\n2.10厚水泥砂浆结合层\n3.30厚1:4干硬性水泥砂浆\n4.80厚C15细石混凝土垫层，\n分缝≤6m*6m，宽缝15~20沥青\n填缝\n5.满足图纸及规范要求", unit: "m2", expr: "223.5996", amount: "223.6", height: "h-[130px]", tree: "item" },
];

function CodeCell({ b }: { b: Bill }) {
  return (
    <div className={`flex ${b.height} ${b.selected ? "relative z-10 bg-white outline-2 -outline-offset-1 outline-[#4499ff]" : ""}`}>
      <span className="w-[9px] shrink-0 border-r border-[#ffcc80]" />
      {b.tree === "item" ? (
        <>
          <span className="h-px w-[3px] shrink-0 self-center bg-[#ffcc80]" />
          <span className="flex shrink-0 flex-col items-center">
            <span className="flex-1" />
            <button aria-label="折叠" className="grid size-[13px] place-items-center border border-[#888] bg-white"><span className="h-px w-[7px] bg-black" /></button>
            <span className="w-px flex-1 bg-[#ffcc80]" />
          </span>
          <span className="ml-1 self-center pb-0.5">{b.code}</span>
        </>
      ) : (
        <>
          <span className={`w-2.5 shrink-0 border-r border-[#ffcc80] ${b.tree === "last" ? "h-1/2" : "h-full"}`} />
          <span className="h-px w-4 shrink-0 self-center bg-[#ffcc80]" />
          <span className="ml-[5px] self-center pb-0.5">{b.code}</span>
        </>
      )}
    </div>
  );
}

function BillGrid() {
  return (
    <div className="flex min-h-0 flex-1">
      <div className="flex min-w-0 flex-1 flex-col">
        <div className="min-h-0 flex-1 overflow-hidden border-t border-l border-[#c0c0c0] bg-white">
          <table className="w-[1020px] table-fixed border-separate border-spacing-0 whitespace-pre text-[#222]">
            <colgroup>
              <col className="w-[21px]" /><col className="w-[126px]" /><col className="w-[41px]" /><col className="w-[221px]" />
              <col className="w-[161px]" /><col className="w-[81px]" /><col className="w-[46px]" /><col className="w-[71px]" />
              <col className="w-[86px]" /><col className="w-[86px]" /><col />
            </colgroup>
            <thead>
              <tr className="h-6">
                <th className={head} />
                <th className={activeHead}>编码</th>
                {["类别", "名称", "项目特征", "锁定综合单价", "单位", "含量", "工程量表达式", "工程量", "单价"].map((h) => (
                  <th key={h} className={head}>{h}</th>
                ))}
              </tr>
            </thead>
            <tbody>
              {bills.map((b, i) => {
                const tone = b.selected ? "bg-[#92c8f6]" : b.tree === "item" ? "bg-[#deeaff]" : "bg-white";
                return (
                  <tr key={i}>
                    <td className={`${frame} text-center ${b.selected ? "bg-[#ffe6c8]" : "bg-white"}`}>{b.no}</td>
                    <td className={`${frame} ${tone}`}><CodeCell b={b} /></td>
                    <td className={`${cell} ${tone} text-center`}>{b.kind}</td>
                    <td className={`${cell} ${tone} pl-0.5`}>{b.name}</td>
                    <td className={`${cell} ${tone} pl-0.5`}>
                      <div className="relative">
                        {b.feature}
                        {b.marked && <span className="absolute top-[22px] left-[7px] h-6 w-[124px] border-3 border-[#f21ff0]" />}
                      </div>
                    </td>
                    <td className={`${cell} ${tone} text-center`}>{b.tree === "item" && <Checkbox label="锁定综合单价" />}</td>
                    <td className={`${cell} ${tone} pl-0.5`}>{b.unit}</td>
                    <td className={`${cell} ${tone} text-center`}>{b.qty}</td>
                    <td className={`${cell} ${tone} pl-0.5`}>{b.expr}</td>
                    <td className={`${cell} ${tone} pr-0.5 text-right`}>{b.amount}</td>
                    <td className={`${cell} ${tone} pl-[35px]`}>{b.price}</td>
                  </tr>
                );
              })}
            </tbody>
          </table>
        </div>
        <HScroll thumb="w-[42%]" />
      </div>
      <VScroll lead="mt-[50px]" thumb="h-[62px]" />
    </div>
  );
}

const detailTabs = ["工料机显示", "单价构成", "标准换算", "换算信息", "特征及内容", "组价方案", "工程量明细", "反查图形工程量", "说明信息"];

type Res = {
  no: string; code: string; kind: string; name: string; spec?: string; unit: string;
  qty: string; changed?: boolean; count: string; base: string; market: string; edited?: boolean;
  total: string; estimate?: "on" | "off"; origin: string; plus?: boolean;
};

const resources: Res[] = [
  { no: "1", code: "R00001", kind: "人", name: "综合人工", unit: "工日", qty: "5.579", changed: true, count: "3.70055", base: "115", market: "145", edited: true, total: "536.58", origin: "7.919" },
  { no: "2", code: "YB403004", kind: "商浆", name: "预拌水泥砂浆", spec: "1:3", unit: "m3", qty: "1.02", changed: true, count: "0.67657", base: "283.86", market: "539.33", edited: true, total: "364.89", estimate: "on", origin: "2.04" },
  { no: "3", code: "403030", kind: "浆", name: "素水泥浆", unit: "m3", qty: "0.1", count: "0.06633", base: "503.95", market: "901.48", edited: true, total: "59.8", estimate: "off", origin: "0.1", plus: true },
  { no: "6", code: "C00010", kind: "材", name: "水", unit: "m3", qty: "0.4", count: "0.26532", base: "3.5", market: "3.88", edited: true, total: "1.03", estimate: "on", origin: "0.4" },
  { no: "7", code: "J00001", kind: "机", name: "干混砂浆罐式搅拌机", unit: "台班", qty: "0.17", changed: true, count: "0.11276", base: "226.41", market: "226.41", total: "25.53", origin: "0.34" },
  { no: "8", code: "GLF", kind: "管", name: "管理费", unit: "元", qty: "181.5", changed: true, count: "120.38895", base: "1", market: "1", total: "120.39", origin: "262.5" },
  { no: "9", code: "LR", kind: "利", name: "利润", unit: "元", qty: "107.56", changed: true, count: "71.34455", base: "1", market: "1", total: "71.34", origin: "155.56" },
  { no: "10", code: "CLFTZ", kind: "材", name: "材料费调整", unit: "元", qty: "0.01", changed: true, count: "0.00663", base: "1", market: "1", total: "0.01", origin: "0.02" },
];

const strong = "font-['Liberation_Mono',monospace] font-bold";

function DetailPanel() {
  return (
    <div className="flex h-60 shrink-0 flex-col border-t-2 border-[#c0c0c0] bg-[#f5f5f5]">
      <div className="flex h-[30px] shrink-0 items-end gap-0.5 pl-2">
        {detailTabs.map((t, i) => (
          <button key={t} className={`h-[25px] rounded-t-[2px] px-[15px] ${i === 0 ? "bg-[#4499ff] font-bold text-white" : "bg-[#bfbfbf] text-[#222]"}`}>{t}</button>
        ))}
      </div>
      <div className="flex min-h-0 flex-1 font-['Noto_Sans_Mono_CJK_SC','Noto_Sans_CJK_SC',monospace]">
        <div className="flex min-w-0 flex-1 flex-col">
          <div className="min-h-0 flex-1 overflow-hidden border-t border-l border-[#c0c0c0] bg-white">
            <table className="w-full table-fixed border-separate border-spacing-0 whitespace-pre text-[#222]">
              <colgroup>
                <col className="w-[21px]" /><col className="w-[91px]" /><col className="w-[38px]" /><col className="w-[127px]" />
                <col className="w-[75px]" /><col className="w-[46px]" /><col className="w-[49px]" /><col className="w-[49px]" />
                <col className="w-[64px]" /><col className="w-[65px]" /><col className="w-[65px]" /><col className="w-[65px]" />
                <col className="w-[57px]" /><col className="w-[57px]" /><col className="w-[57px]" /><col />
              </colgroup>
              <thead>
                <tr className="h-[23px]">
                  {["", "编码", "类别", "名称", "规格及型号", "单位", "损耗率", "含量", "数量", "定额价", "市场价", "合价", "是否暂估", "锁定数量", "是否计价", "原始含量"].map((h) => (
                    <th key={h} className={h === "名称" ? activeHead : head}>{h}</th>
                  ))}
                </tr>
              </thead>
              <tbody>
                {resources.map((r, i) => {
                  const on = i === 0;
                  const tone = on ? "bg-[#92c8f6]" : "bg-white";
                  return (
                    <tr key={r.no} className="h-[23px]">
                      <td className={`border-b border-b-[#c0c0c0] p-0 text-center ${on ? "border-r-2 border-r-[#4499ff] bg-[#ffe6c8] font-bold" : "border-r border-r-[#c0c0c0]"}`}>{r.no}</td>
                      <td className={`${cell} ${tone} pl-0.5`}>
                        <span className="flex items-center gap-1">
                          {r.plus && (
                            <button aria-label="展开" className="grid size-[13px] place-items-center border border-[#888]">
                              <svg viewBox="0 0 7 7" className="size-[7px]" stroke="#000" aria-hidden="true"><path d="M0 3.500h7M3.500 0v7" /></svg>
                            </button>
                          )}
                          {r.code}
                        </span>
                      </td>
                      <td className={`${cell} ${tone} text-center`}>{r.kind}</td>
                      <td className={on ? frame : `${cell} pl-0.5`}>
                        {on ? (
                          <div className="relative z-10 flex h-[22px] items-center bg-white pr-1 pb-0.5 pl-0.5 outline-2 -outline-offset-1 outline-[#808080]">
                            <input aria-label="名称" defaultValue={r.name} className="min-w-0 flex-1 bg-transparent outline-none" />
                            <button aria-label="更多" className="font-bold text-[#2f86c8]">…</button>
                          </div>
                        ) : r.name}
                      </td>
                      <td className={`${cell} ${tone} pl-0.5`}>{r.spec}</td>
                      <td className={`${cell} ${tone} text-center`}>{r.unit}</td>
                      <td className={`${cell} ${tone}`} />
                      <td className={`${r.changed ? frame : cell} pr-0.5 text-right ${on ? tone : r.changed ? "bg-[#dbf8f8]" : ""} ${r.changed ? `text-[#f00000] ${strong}` : ""}`}>{r.qty}</td>
                      <td className={`${cell} ${tone} pr-0.5 text-right`}>{r.count}</td>
                      <td className={`${cell} ${tone} pr-0.5 text-right`}>{r.base}</td>
                      <td className={`${r.edited ? frame : cell} ${tone} pr-0.5 text-right ${r.edited ? `text-[#0000f0] ${strong}` : ""}`}>{r.market}</td>
                      <td className={`${cell} ${tone} pr-0.5 text-right`}>{r.total}</td>
                      <td className={`${cell} ${tone} text-center`}>{r.estimate && <Checkbox label="是否暂估" disabled={r.estimate === "off"} />}</td>
                      <td className={`${cell} ${tone} text-center`}><Checkbox label="锁定数量" /></td>
                      <td className={`${cell} ${tone} text-center`}><Checkbox label="是否计价" checked /></td>
                      <td className={`border-b border-[#c0c0c0] p-0 pr-0.5 pb-0.5 text-right ${on ? tone : "bg-[#fffbf5]"}`}>{r.origin}</td>
                    </tr>
                  );
                })}
              </tbody>
            </table>
          </div>
          <HScroll thumb="w-[91%]" />
        </div>
        <VScroll lead="mt-0.5" thumb="h-[129px]" />
      </div>
    </div>
  );
}

function StatusBar() {
  const divider = "h-[18px] w-px bg-[#9aa3b0]";
  return (
    <footer className="flex h-8 shrink-0 items-center border-t border-[#d9d9d9] bg-[#f5f5f5] px-1.5 whitespace-nowrap text-[#222]">
      <span className="ml-1">计税方式：增值税</span>
      <span className={`${divider} ml-7`} />
      <span className="ml-4">工程量清单项目计量规范(2013-海南)</span>
      <span className={`${divider} ml-7`} />
      <span className="ml-4">海南省房屋建筑与装饰工程综合定额(2017)</span>
      <span className={`${divider} ml-7`} />
      <span className="ml-4">17建筑第一章</span>
      <span className={`${divider} ml-7`} />
      <button className="ml-[26px] h-[22px] w-20 rounded-[3px] bg-[#4499ff] text-white">0分</button>
      <div className="ml-auto flex items-center">
        <button aria-label="上下布局" className="grid size-[22px] place-items-center rounded-[3px] border border-[#d2d2d2] bg-white">
          <svg viewBox="0 0 12 12" className="size-3" fill={B} aria-hidden="true"><rect width="12" height="7" rx="1.500" /><rect y="8" width="12" height="4" rx="1.500" /></svg>
        </button>
        <button aria-label="左右布局" className="ml-2.5">
          <svg viewBox="0 0 12 12" className="size-3" fill="#8c8c8c" aria-hidden="true"><rect width="7" height="12" rx="1.500" /><rect x="8" width="4" height="12" rx="1.500" /></svg>
        </button>
        <span className="ml-[19px] w-8 text-[12px]">100%</span>
        <button aria-label="缩小" className="ml-[11px]">
          <svg viewBox="0 0 12 12" className="size-3" stroke="#555" strokeWidth="2" aria-hidden="true"><path d="M0 6h12" /></svg>
        </button>
        <input
          type="range"
          aria-label="缩放"
          min={0}
          max={100}
          defaultValue={34}
          className="ml-[11px] h-3 w-[106px] appearance-none bg-transparent [&::-webkit-slider-runnable-track]:h-0.5 [&::-webkit-slider-runnable-track]:bg-[#c6c6c6] [&::-webkit-slider-thumb]:-mt-[5px] [&::-webkit-slider-thumb]:size-3 [&::-webkit-slider-thumb]:appearance-none [&::-webkit-slider-thumb]:rounded-full [&::-webkit-slider-thumb]:border [&::-webkit-slider-thumb]:border-[#555] [&::-webkit-slider-thumb]:bg-white"
        />
        <button aria-label="放大" className="ml-[11px]">
          <svg viewBox="0 0 12 12" className="size-3" stroke="#555" strokeWidth="2" aria-hidden="true"><path d="M0 6h12M6 0v12" /></svg>
        </button>
      </div>
    </footer>
  );
}

export default function App() {
  return (
    <div className="relative flex h-screen flex-col overflow-hidden bg-[#f5f5f5] font-['Noto_Sans','Noto_Sans_CJK_SC',sans-serif] text-[12px] leading-[14px] text-[#222]">
      <header className="shrink-0 border-b border-[#d4d4d4] bg-linear-to-b from-white to-[#f3f3f3]">
        <TitleBar />
        <MenuBar />
      </header>
      <Ribbon />
      <PageTabs />
      <main className="flex min-h-0 flex-1">
        <ProjectPanel />
        <SectionPanel />
        <section className="flex min-w-0 flex-1 flex-col border-l-4 border-[#ececec]">
          <div className="flex min-h-0 flex-1 flex-col font-['Noto_Sans_Mono_CJK_SC','Noto_Sans_CJK_SC',monospace]">
            <BillGrid />
          </div>
          <DetailPanel />
        </section>
      </main>
      <StatusBar />
      <div className="flex h-2 shrink-0 overflow-hidden bg-linear-to-r from-[#223a45] to-[#18233f]">
        <span className="ml-[55%] w-[11%] bg-[#4a5863]" />
        <span className="mt-[3px] mr-[70px] ml-auto text-white">11:15</span>
        <span className="mr-1 w-px bg-[#6b7689]" />
      </div>
      <svg viewBox="0 0 213 16" className="pointer-events-none absolute top-[381px] left-[417px] z-20 h-4 w-[213px]" aria-hidden="true">
        <path d="M0 14.500V16L196 11.500V16L213 8 196 .500V4z" fill="#fb3837" />
      </svg>
    </div>
  );
}
